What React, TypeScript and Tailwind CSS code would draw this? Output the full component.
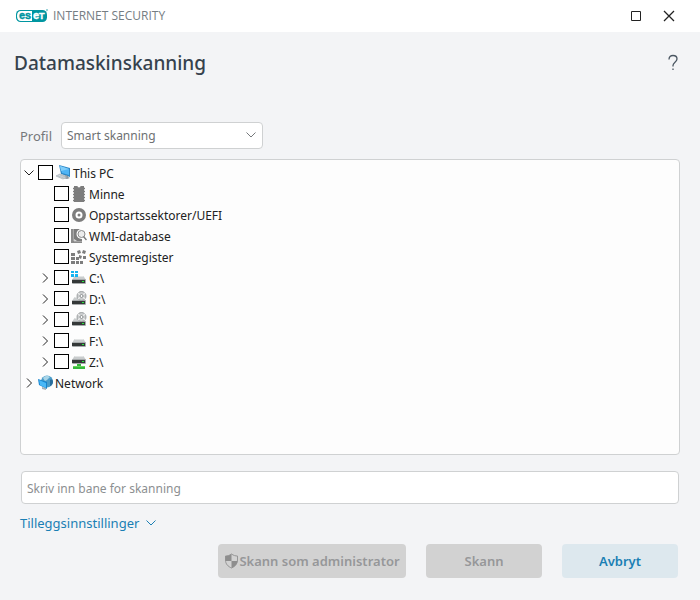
import { useState, type ReactNode } from 'react'

function EsetLogo() {
	return (
		<svg width="33" height="14" viewBox="0 0 33 14" aria-label="ESET">
			<rect y="1" width="31" height="12" rx="4.500" fill="#0096a1" />
			<path d="M5 2H16v10H5C2.500 12 1 10.500 1 7s1.500-5 4-5Z" fill="#fff" />
			<g
				fontFamily="Liberation Sans, sans-serif"
				fontWeight="700"
				fontSize="11"
				strokeWidth=".4"
			>
				<text x="3" y="10" fill="#0096a1" stroke="#0096a1">
					es
				</text>
				<text x="17" y="10" fill="#fff" stroke="#fff">
					e
				</text>
				<text x="23" y="10" fontSize="9" fill="#fff" stroke="#fff">
					T
				</text>
			</g>
			<circle cx="31" cy="1" r="1" fill="#7cc6cc" />
		</svg>
	)
}

function Chevron({ open, className }: { open?: boolean; className?: string }) {
	return (
		<svg
			width="12"
			height="12"
			viewBox="0 0 12 12"
			fill="none"
			stroke="currentColor"
			className={className}
		>
			<path d={open ? 'M1.500 3.500 6 8l4.500-4.500' : 'M4 1.500 8.500 6 4 10.500'} />
		</svg>
	)
}

function Icon({ children }: { children: ReactNode }) {
	return (
		<svg
			width="16"
			height="16"
			viewBox="0 0 16 16"
			className="shrink-0"
			aria-hidden="true"
		>
			{children}
		</svg>
	)
}

function PcIcon() {
	return (
		<Icon>
			<path d="m4 0 11 3v9L6 9Z" fill="#2c86c4" />
			<path d="m5 1 9 3v6L7 8Z" fill="#4eb4f5" />
			<path d="m5 1 9 3-8 2Z" fill="#7fcdfa" />
			<path d="m10 10 3 1v1l2 1-3 1-4-1Z" fill="#8d979e" />
			<path d="m1 11 4-2 7 3-4 2Z" fill="#d3d9dd" stroke="#9aa4ab" strokeWidth=".6" />
			<path d="m3 11 6 2M5 10l5 2" stroke="#a9b3b9" strokeWidth=".6" />
		</Icon>
	)
}

function MemoryIcon() {
	return (
		<Icon>
			<path d="M3 0h3.500a1.500 1.500 0 0 0 3 0H13v16H3Z" fill="#7d7d7d" />
			<path
				d="M2 2.500h12M2 5.500h12M2 8.500h12M2 11.500h12M2 14.500h12"
				stroke="#7d7d7d"
				strokeWidth="1.500"
			/>
		</Icon>
	)
}

function BootIcon() {
	return (
		<Icon>
			<circle cx="8" cy="8" r="7" fill="#7d7d7d" />
			<circle cx="8" cy="8" r="2.500" fill="#7d7d7d" stroke="#fff" strokeWidth="2" />
		</Icon>
	)
}

function WmiIcon() {
	return (
		<Icon>
			<path d="M0 1h3v12h8v2H0Z" fill="#8a8a8a" />
			<path d="M3 1v12h8" fill="none" stroke="#c4c4c4" />
			<path d="M3 1h8v12H6l-3-2Z" fill="#7d7d7d" />
			<circle cx="10.500" cy="6" r="5" fill="#fff" />
			<path d="m13 9 2.500 3" stroke="#fff" strokeWidth="3" />
			<circle cx="10.500" cy="6" r="3.500" fill="#ececec" stroke="#8a8a8a" />
			<path d="m12.500 8.500 3 3.500" stroke="#7d7d7d" strokeWidth="1.500" />
		</Icon>
	)
}

function RegistryIcon() {
	return (
		<Icon>
			<g fill="#7d7d7d">
				<path d="M0 4h4v3H0ZM0 8h4v3H0ZM5 8h3v3H5ZM0 12h4v3H0ZM5 12h3v3H5ZM9 12h3v3H9Z" />
				<path d="m6 2 3-1 1 3-3 1ZM12 1l3 1-1 3-3-1ZM8 6l3 1-1 3-2-1ZM12 7h3v3h-3Z" />
			</g>
		</Icon>
	)
}

function DriveBody() {
	return (
		<>
			<path d="M3.500 6h9L15 10H1Z" fill="#c9cccd" />
			<path d="M4 6h8l1 1H3Z" fill="#e3e5e5" />
			<rect x="1" y="9" width="14" height="5" rx="1" fill="#a7abac" />
			<rect x="1" y="10" width="13" height="3" fill="#343838" />
			<path d="M11 11h2v1h-2Z" fill="#24e83c" />
		</>
	)
}

function SystemDriveIcon() {
	return (
		<Icon>
			<DriveBody />
			<path d="M0 1h3v2H0ZM4 1h3v2H4ZM0 4h3v3H0ZM4 4h3v3H4Z" fill="#14b4f0" />
		</Icon>
	)
}

function DiscDriveIcon() {
	return (
		<Icon>
			<DriveBody />
			<circle cx="10.500" cy="5" r="4.500" fill="#cbcdce" stroke="#8e9293" strokeWidth=".8" />
			<path d="m7 2 7 6M14 2 7 8" stroke="#e9eaea" strokeWidth="1.200" />
			<circle cx="10.500" cy="5" r="1.500" fill="#fff" stroke="#898d8e" />
		</Icon>
	)
}

function DriveIcon() {
	return (
		<Icon>
			<DriveBody />
		</Icon>
	)
}

function NetworkDriveIcon() {
	return (
		<Icon>
			<g transform="translate(0 -4)">
				<DriveBody />
			</g>
			<path d="M6 10h4v2h4v3H2v-3h4Z" fill="#37b83c" />
			<path d="M2 12.500h12" stroke="#67d65c" />
		</Icon>
	)
}

function NetworkIcon() {
	return (
		<Icon>
			<circle cx="9" cy="6.500" r="6" fill="#4b9cc9" />
			<path d="M5 3c2-3 6-2 7-1L9 5 7 6Z" fill="#a8d5e8" />
			<path d="M12 5c2-1 3 0 3 2s-2 4-3 4Z" fill="#296d9c" />
			<path d="m0 4 9 3v7L1 10Z" fill="#1683cd" />
			<path d="m1 5 7 3v5l-6-3Z" fill="#49b8f7" />
			<path d="m4 12 4 1v2l-4-1Z" fill="#a3b0b8" />
		</Icon>
	)
}

function ShieldIcon() {
	return (
		<svg width="15" height="16" viewBox="0 0 14 16" aria-hidden="true">
			<path
				d="M7 1c2 1.500 4 2 6 2v4c0 4-2.500 6.500-6 8-3.500-1.500-6-4-6-8V3c2 0 4-.5 6-2Z"
				fill="#d2d2d2"
				stroke="#969696"
			/>
			<path d="M7 1v7H1V3c2 0 4-.5 6-2ZM7 8h6c-.5 3.500-2.500 5.500-6 7Z" fill="#8e8e8e" />
		</svg>
	)
}

type Target = {
	name: string
	icon: ReactNode
	expandable?: boolean
}

const targets: Target[] = [
	{ name: 'Minne', icon: <MemoryIcon /> },
	{ name: 'Oppstartssektorer/UEFI', icon: <BootIcon /> },
	{ name: 'WMI-database', icon: <WmiIcon /> },
	{ name: 'Systemregister', icon: <RegistryIcon /> },
	{ name: 'C:\\', icon: <SystemDriveIcon />, expandable: true },
	{ name: 'D:\\', icon: <DiscDriveIcon />, expandable: true },
	{ name: 'E:\\', icon: <DiscDriveIcon />, expandable: true },
	{ name: 'F:\\', icon: <DriveIcon />, expandable: true },
	{ name: 'Z:\\', icon: <NetworkDriveIcon />, expandable: true },
]

function TreeToggle({
	label,
	open,
	onClick,
}: {
	label: string
	open?: boolean
	onClick?: () => void
}) {
	return (
		<button
			type="button"
			aria-label={label}
			aria-expanded={!!open}
			onClick={onClick}
			className="flex w-4 shrink-0 pt-0.5 pl-px text-[#222]"
		>
			<Chevron open={open} />
		</button>
	)
}

function TreeCheckbox({ name, icon }: Target) {
	return (
		<label className="flex items-start gap-0.5">
			<input
				type="checkbox"
				className="size-[15px] shrink-0 appearance-none border border-black bg-white checked:bg-[#0096a1]"
			/>
			{icon}
			<span>{name}</span>
		</label>
	)
}

export default function App() {
	const [open, setOpen] = useState(true)

	return (
		<div className="flex min-h-screen flex-col bg-[#f3f4f6] font-['Noto_Sans',sans-serif] text-[13px] leading-5 text-[#75787b]">
			<header className="flex h-8 items-center bg-white pr-6 pl-4">
				<EsetLogo />
				<span className="ml-1 font-['Open_Sans',sans-serif] text-xs text-[#757d83]">
					INTERNET SECURITY
				</span>
				<div className="ml-auto flex items-center gap-5 text-[#222]">
					<button type="button" aria-label="Maksimer">
						<svg width="12" height="12" viewBox="0 0 12 12" fill="none" stroke="currentColor">
							<path d="M1.500 1.500h9v9h-9Z" />
						</svg>
					</button>
					<button type="button" aria-label="Lukk">
						<svg width="14" height="14" viewBox="0 0 14 14" fill="none" stroke="currentColor" strokeWidth="1.300">
							<path d="m2 2 10 10M12 2 2 12" />
						</svg>
					</button>
				</div>
			</header>

			<main className="flex flex-1 flex-col px-5 pb-[22px]">
				<div className="-ml-1.5 flex h-[62px] items-center justify-between">
					<h1 className="text-[19px] font-medium text-[#36424d]">
						Datamaskinskanning
					</h1>
					<button type="button" aria-label="Hjelp" className="text-[#4a5661]">
						<svg width="14" height="18" viewBox="0 0 14 18" fill="none" stroke="currentColor" strokeWidth="1.300">
							<path d="M3 5.500C3 3 4.500 1.500 7 1.500s4 1.500 4 3.500c0 3-4 3.500-4 6.500v1M7 14.500V16" />
						</svg>
					</button>
				</div>

				<div className="mt-7 flex items-center gap-[9px]">
					<label htmlFor="profile">Profil</label>
					<div className="relative">
						<select
							id="profile"
							className="h-[27px] w-[202px] appearance-none rounded border border-[#cfd1d2] bg-white px-[5px] pt-px text-xs text-[#6e7173]"
						>
							<option>Smart skanning</option>
						</select>
						<Chevron open className="pointer-events-none absolute top-[7px] right-1.5" />
					</div>
				</div>

				<ul className="mt-2.5 flex-1 rounded border border-[#cfd1d2] bg-[#fdfdfd] py-[5px] pl-px text-xs leading-[17px] text-[#222]">
					<li>
						<div className="flex h-[21px] items-start">
							<TreeToggle label="This PC" open={open} onClick={() => setOpen(!open)} />
							<TreeCheckbox name="This PC" icon={<PcIcon />} />
						</div>
						{open && (
							<ul className="pl-4">
								{targets.map((target) => (
									<li key={target.name} className="flex h-[21px] items-start">
										{target.expandable ? (
											<TreeToggle label={target.name} />
										) : (
											<span className="w-4 shrink-0" />
										)}
										<TreeCheckbox {...target} />
									</li>
								))}
							</ul>
						)}
					</li>
					<li className="flex h-[21px] items-start">
						<TreeToggle label="Network" />
						<NetworkIcon />
						<span className="ml-px">Network</span>
					</li>
				</ul>

				<input
					type="text"
					aria-label="Skriv inn bane for skanning"
					placeholder="Skriv inn bane for skanning"
					className="mx-px mt-4 h-[33px] rounded border border-[#cfd1d2] bg-white px-[5px] pt-px text-xs placeholder:text-[#8c8f91]"
				/>

				<a href="#tillegg" className="mt-[9px] flex items-center gap-1.5 self-start text-[#1a7fb4]">
					Tilleggsinnstillinger
					<Chevron open />
				</a>

				<div className="mt-[11px] flex justify-end gap-5 pr-0.5 text-[13px] font-semibold">
					<button
						type="button"
						disabled
						className="flex h-[34px] w-[188px] items-center justify-center rounded bg-[#d2d2d2] text-[#969799]"
					>
						<ShieldIcon />
						Skann som administrator
					</button>
					<button
						type="button"
						disabled
						className="h-[34px] w-[116px] rounded bg-[#d2d2d2] text-[#969799]"
					>
						Skann
					</button>
					<button
						type="button"
						className="h-[34px] w-[116px] rounded bg-[#dde8ee] text-[#1a7fb4]"
					>
						Avbryt
					</button>
				</div>
			</main>
		</div>
	)
}
